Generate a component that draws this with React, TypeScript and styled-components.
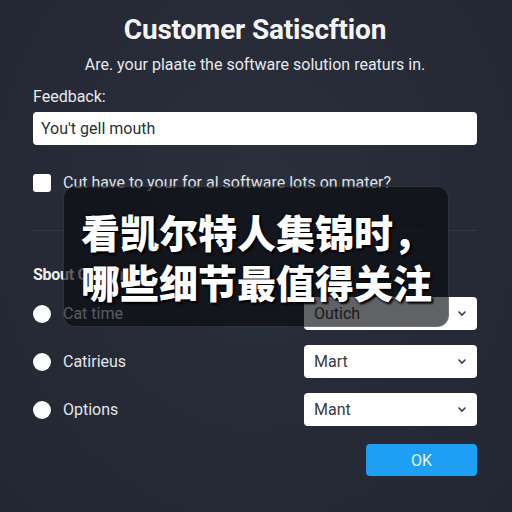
import styled, { createGlobalStyle } from "styled-components";

const GlobalStyle = createGlobalStyle`
  html, body {
    margin: 0;
    padding: 0;
    background: #262b38;
  }
  body {
    font-family: Roboto, "Liberation Sans", sans-serif;
  }
`;

const Page = styled.div`
  position: relative;
  width: 512px;
  height: 512px;
  box-sizing: border-box;
  padding: 0 35px 0 33px;
  background: radial-gradient(ellipse at 50% 40%, #2a2f3c 0%, #252a36 60%, #222733 100%);
  color: #f2f3f5;
  display: flex;
  flex-direction: column;
  overflow: hidden;
`;

const Title = styled.h1`
  margin: 13px 0 0;
  font-size: 28px;
  line-height: 34px;
  font-weight: 700;
  text-align: center;
  color: #f4f5f7;
  letter-spacing: -0.2px;
`;

const Subtitle = styled.p`
  margin: 7px 0 0;
  font-size: 16px;
  line-height: 22px;
  text-align: center;
  color: #e6e8ec;
`;

const Label = styled.label`
  margin-top: 10px;
  font-size: 16px;
  line-height: 22px;
  color: #e8e9ec;
`;

const TextInput = styled.div`
  margin-top: 4px;
  height: 33px;
  box-sizing: border-box;
  background: #ffffff;
  border-radius: 4px;
  padding: 0 8px;
  display: flex;
  align-items: center;
  font-size: 16px;
  color: #2e3035;
`;

const CheckRow = styled.div`
  margin-top: 28px;
  display: flex;
  align-items: center;
  gap: 12px;
  font-size: 16px;
  color: #dfe1e6;
`;

const CheckBox = styled.span`
  width: 18px;
  height: 18px;
  border-radius: 3px;
  background: #ffffff;
  flex-shrink: 0;
`;

const Divider = styled.hr`
  margin: 38px 0 0;
  border: none;
  height: 1px;
  background: rgba(255, 255, 255, 0.06);
`;

const SectionTitle = styled.h2`
  margin: 34px 0 0;
  font-size: 16px;
  line-height: 20px;
  font-weight: 700;
  color: #eceef2;
  letter-spacing: -0.3px;
`;

const Options = styled.div`
  margin-top: 12px;
  display: flex;
  flex-direction: column;
  gap: 15px;
`;

const OptionRow = styled.div`
  display: flex;
  align-items: center;
  justify-content: space-between;
  height: 33px;
`;

const RadioLabel = styled.div`
  display: flex;
  align-items: center;
  gap: 12px;
  font-size: 16px;
  color: #e3e5ea;
`;

const Radio = styled.span`
  width: 18px;
  height: 18px;
  border-radius: 50%;
  background: #ffffff;
`;

const Select = styled.div`
  width: 173px;
  height: 33px;
  box-sizing: border-box;
  background: #ffffff;
  border-radius: 4px;
  padding: 0 10px;
  display: flex;
  align-items: center;
  justify-content: space-between;
  font-size: 16px;
  color: #3a3c42;
`;

const Footer = styled.div`
  margin-top: 18px;
  display: flex;
  justify-content: flex-end;
`;

const OkButton = styled.button`
  width: 111px;
  height: 32px;
  border: none;
  border-radius: 4px;
  background: #1f9ff3;
  color: #e4f6ff;
  font-family: Roboto, "Liberation Sans", sans-serif;
  font-size: 16px;
`;

const Overlay = styled.div`
  position: absolute;
  left: 63px;
  top: 186px;
  width: 386px;
  height: 141px;
  box-sizing: border-box;
  border-radius: 12px;
  border: 1px solid rgba(255, 255, 255, 0.12);
  background: rgba(8, 9, 12, 0.64);
  padding: 19px 0 0 17px;
`;

const OverlayLine = styled.div`
  font-family: "Noto Sans CJK SC", sans-serif;
  font-weight: 900;
  font-size: 39px;
  line-height: 50px;
  color: #ffffff;
  white-space: nowrap;
  text-shadow: 0 0 3px #000, 2px 2px 2px #000;
`;

function Chevron() {
  return (
    <svg width="10" height="7" viewBox="0 0 10 7">
      <path d="M2 2 L5 5 L8 2" fill="none" stroke="#3a3c42" strokeWidth="1.6" strokeLinecap="round" />
    </svg>
  );
}

const rows = [
  { label: "Cat time", value: "Outich" },
  { label: "Catirieus", value: "Mart" },
  { label: "Options", value: "Mant" },
];

export default function App() {
  return (
    <>
      <GlobalStyle />
      <Page>
        <Title>Customer Satiscftion</Title>
        <Subtitle>Are. your plaate the software solution reaturs in.</Subtitle>
        <Label>Feedback:</Label>
        <TextInput>You't gell mouth</TextInput>
        <CheckRow>
          <CheckBox />
          Cut have to your for al software lots on mater?
        </CheckRow>
        <Divider />
        <SectionTitle>Sbout Options</SectionTitle>
        <Options>
          {rows.map((r) => (
            <OptionRow key={r.label}>
              <RadioLabel>
                <Radio />
                {r.label}
              </RadioLabel>
              <Select>
                {r.value}
                <Chevron />
              </Select>
            </OptionRow>
          ))}
        </Options>
        <Footer>
          <OkButton>OK</OkButton>
        </Footer>
        <Overlay>
          <OverlayLine>看凯尔特人集锦时，</OverlayLine>
          <OverlayLine>哪些细节最值得关注</OverlayLine>
        </Overlay>
      </Page>
    </>
  );
}
